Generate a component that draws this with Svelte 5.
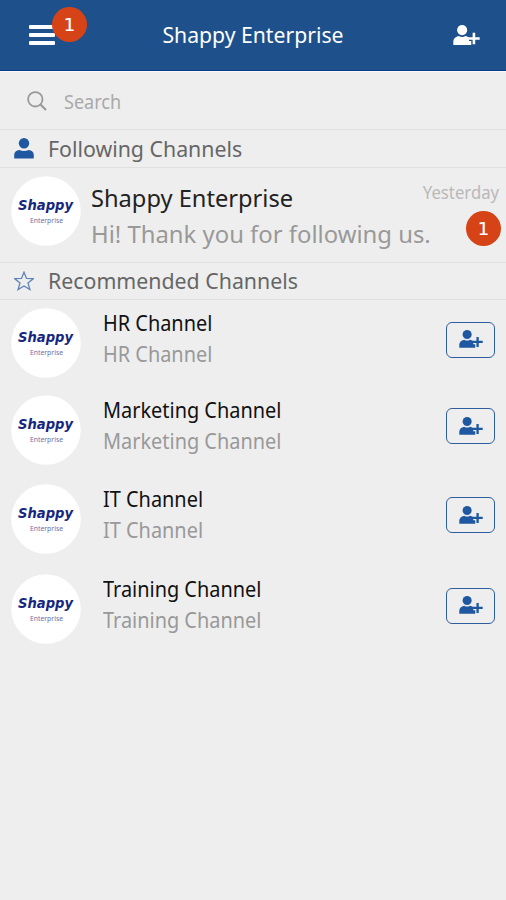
<script lang="ts">
interface Channel {
	name: string;
	description: string;
	height: number;
}

const channels: Channel[] = [
	{ name: "HR Channel", description: "HR Channel", height: 86 },
	{ name: "Marketing Channel", description: "Marketing Channel", height: 87 },
	{ name: "IT Channel", description: "IT Channel", height: 91 },
	{ name: "Training Channel", description: "Training Channel", height: 90 },
];

let unread = $state(1);
let query = $state("");
</script>

{#snippet logo()}
	<svg class="avatar" width="70" height="70" viewBox="0 0 70 70">
		<circle cx="35" cy="35" r="34.8" fill="#fff" />
		<text class="logo-name" x="7" y="34.3" textLength="55" lengthAdjust="spacingAndGlyphs">Shappy</text>
		<text class="logo-sub" x="19" y="46.5" textLength="33" lengthAdjust="spacingAndGlyphs">Enterprise</text>
	</svg>
{/snippet}

{#snippet personAdd(width: number)}
	<svg {width} viewBox="0 0 26 20" fill="currentColor">
		<ellipse cx="8.8" cy="4.9" rx="4.9" ry="4.9" />
		<path d="M0.3 19.2V16c0-3 2-4.8 5.3-5.5 2 1.3 4.4 1.3 6.4 0 1.7.4 2.6.9 3.4 1.7v3.200h2.200v3.800Z" />
		<path d="M18.9 7.5h2.5v4.2h4.3v2.4h-4.3v4.4h-2.5v-4.4h-4.3v-2.4h4.3Z" />
	</svg>
{/snippet}

<div class="app">
	<header>
		<button class="menu" aria-label="Menu">
			<span></span>
			<span></span>
			<span></span>
			<b class="badge">{unread}</b>
		</button>
		<h1>Shappy Enterprise</h1>
		<button class="add" aria-label="Add">
			{@render personAdd(27)}
		</button>
	</header>

	<label class="search">
		<svg width="20" height="20" viewBox="0 0 20 20" fill="none" stroke="#9a9a9a" stroke-width="1.8">
			<circle cx="8.3" cy="8.3" r="7.2" />
			<path d="M13.5 13.5 19 19" stroke-width="2.2" />
		</svg>
		<input type="text" placeholder="Search" bind:value={query} />
	</label>

	<h2 class="following">
		<svg width="20" height="21" viewBox="0 0 20 21" fill="#1f58a0">
			<ellipse cx="10" cy="5.3" rx="5.2" ry="5.2" />
			<path d="M0.2 20.6V17c0-3 2-4.6 5.2-5 2.8 1.4 6.4 1.4 9.2 0 3.2.4 5.2 2 5.2 5v3.6Z" />
		</svg>
		<span>Following Channels</span>
	</h2>

	<div class="followed">
		{@render logo()}
		<div class="followed-text">
			<p class="name">Shappy Enterprise</p>
			<p class="message">Hi! Thank you for following us.</p>
		</div>
		<div class="meta">
			<time>Yesterday</time>
			<b class="count">{unread}</b>
		</div>
	</div>

	<h2 class="recommended">
		<svg width="20" height="20" viewBox="0 0 20 20" fill="none" stroke="#5f82bb" stroke-width="1.3">
			<path d="M10 1.2 12.5 7.4 19.2 7.7 14 11.9 15.9 18.5 10 14.9 4.1 18.5 6 11.9 0.8 7.7 7.5 7.4Z" />
		</svg>
		<span>Recommended Channels</span>
	</h2>

	<ul>
		{#each channels as channel}
			<li style="height: {channel.height}px;">
				{@render logo()}
				<div class="channel-text">
					<p class="title">{channel.name}</p>
					<p class="description">{channel.description}</p>
				</div>
				<button class="follow" aria-label="Follow {channel.name}">
					{@render personAdd(24)}
				</button>
			</li>
		{/each}
	</ul>
</div>

<style>
	:global(body) {
		background: #eee;
	}

	.app {
		width: 506px;
		height: 900px;
		overflow: hidden;
		background: #eee;
		font-family: "Noto Sans", "Open Sans", sans-serif;
	}

	h1, h2, p, ul {
		margin: 0;
		padding: 0;
		font-weight: 400;
		white-space: nowrap;
	}

	svg {
		display: block;
		flex: none;
	}

	button {
		padding: 0;
		border: none;
		background: none;
		font: inherit;
	}

	header {
		display: grid;
		grid-template-columns: 60px 1fr 60px;
		align-items: center;
		box-sizing: border-box;
		height: 71px;
		border-bottom: 1px solid #073b85;
		background: #1e518c;
		color: #fff;
	}

	.menu {
		position: relative;
		display: flex;
		flex-direction: column;
		gap: 4px;
		width: 26px;
		margin-left: 29px;
	}

	.menu span {
		height: 4px;
		border-radius: 1px;
		background: #fff;
	}

	.badge, .count {
		display: flex;
		align-items: center;
		justify-content: center;
		width: 35px;
		height: 35px;
		border-radius: 50%;
		background: #d54317;
		color: #fff;
		font-family: "DejaVu Sans", sans-serif;
		font-size: 18px;
		font-weight: 400;
		-webkit-text-stroke: 0.2px #fff;
	}

	.badge {
		position: absolute;
		left: 23px;
		top: -18px;
	}

	h1 {
		padding-bottom: 2px;
		text-align: center;
		font-size: 22px;
		line-height: 30px;
		transform: scaleX(0.963);
	}

	.add {
		justify-self: end;
		margin-right: 26px;
		color: #fff;
	}

	.search {
		display: flex;
		align-items: center;
		gap: 17px;
		box-sizing: border-box;
		height: 59px;
		padding: 0 27px;
		border-top: 1px solid #fafafa;
		border-bottom: 1px solid #e0e0e0;
	}

	input {
		flex: 1;
		min-width: 0;
		padding: 2px 0 0;
		border: none;
		outline: none;
		background: none;
		font-family: inherit;
		font-size: 19px;
		transform: scaleX(0.95);
		transform-origin: left;
	}

	input::placeholder {
		color: #a9a9a9;
	}

	h2 {
		display: flex;
		align-items: center;
		gap: 14px;
		box-sizing: border-box;
		padding-left: 14px;
		border-bottom: 1px solid #e0e0e0;
		color: #666;
		font-size: 22px;
		line-height: 30px;
	}

	h2 span {
		padding-bottom: 2px;
		transform: scaleX(0.969);
		transform-origin: left;
	}

	.following {
		height: 38px;
	}

	.recommended {
		height: 37px;
	}

	.followed {
		display: flex;
		box-sizing: border-box;
		height: 95px;
		padding: 8px 5px 0 11px;
		border-bottom: 1px solid #e0e0e0;
	}

	.followed-text {
		flex: 1;
		min-width: 0;
		padding: 4px 0 0 10px;
	}

	.name {
		color: #222;
		font-size: 24px;
		line-height: 36px;
		transform: scaleX(0.985);
		transform-origin: left;
	}

	.message {
		color: #999;
		font-size: 24px;
		line-height: 36px;
		transform: scaleX(0.994);
		transform-origin: left;
	}

	.meta {
		display: flex;
		flex: none;
		flex-direction: column;
		align-items: flex-end;
		width: 70px;
		padding-top: 4px;
	}

	time {
		margin-right: 2px;
		color: #b9b9b9;
		font-size: 18px;
		line-height: 24px;
		transform: scaleX(0.93);
		transform-origin: right;
	}

	.count {
		margin-top: 7px;
	}

	li {
		display: flex;
		align-items: center;
		box-sizing: border-box;
		padding: 0 11px;
	}

	.channel-text {
		flex: 1;
		padding: 0 0 10px 22px;
		transform: scaleX(0.905);
		transform-origin: 22px 50%;
	}

	.title, .description {
		font-size: 22px;
		line-height: 31px;
	}

	.title {
		color: #111;
	}

	.description {
		color: #999;
	}

	.follow {
		display: flex;
		align-items: center;
		justify-content: center;
		box-sizing: border-box;
		width: 49px;
		height: 36px;
		margin-top: -7px;
		border: 1.5px solid #2d5f9f;
		border-radius: 6px;
		color: #1f58a0;
	}

	.logo-name {
		fill: #17277f;
		font-family: "DejaVu Sans", sans-serif;
		font-size: 14.5px;
		font-style: italic;
		font-weight: 700;
	}

	.logo-sub {
		fill: #6870a8;
		font-size: 7px;
	}
</style>
